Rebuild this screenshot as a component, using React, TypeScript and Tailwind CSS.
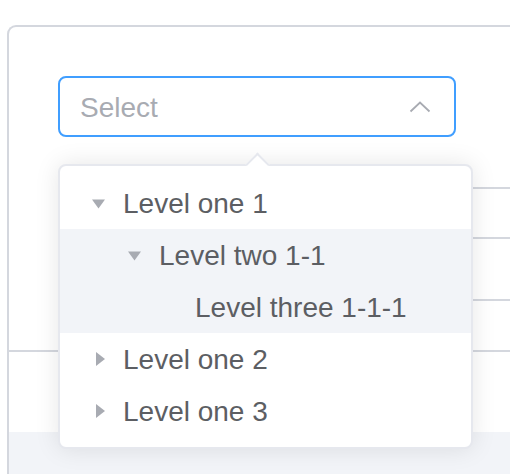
import React from "react";

const font = { fontFamily: '"Liberation Sans", Arial, Helvetica, sans-serif' };

function Down() {
  return (
    <svg width="14" height="14" viewBox="0 0 14 14" className="shrink-0">
      <polygon points="0,3.5 13,3.5 6.5,12.5" fill="#a8abb2" />
    </svg>
  );
}

function Right() {
  return (
    <svg width="14" height="14" viewBox="0 0 14 14" className="shrink-0">
      <polygon points="4,0 13,7 4,14" fill="#a8abb2" />
    </svg>
  );
}

function Row({
  level,
  icon,
  label,
  hl,
}: {
  level: number;
  icon: "down" | "right" | "none";
  label: string;
  hl?: boolean;
}) {
  const pl = level === 1 ? "pl-[32px]" : level === 2 ? "pl-[68px]" : "pl-[104px]";
  return (
    <div className={`flex h-[52px] items-center ${pl} ${hl ? "bg-[#f2f4f8]" : ""}`}>
      {icon === "down" ? <Down /> : icon === "right" ? <Right /> : <div className="w-[14px] shrink-0" />}
      <span className="ml-[17px] pt-[2px] text-[28px] leading-none text-[#5c5e63] whitespace-nowrap">{label}</span>
    </div>
  );
}

export default function App() {
  return (
    <div className="w-[510px] h-[474px] overflow-hidden bg-white pl-[7px] pt-[25px]" style={font}>
      <div className="w-[620px] h-[600px] border-l-2 border-t-2 border-[#d4d7de] rounded-tl-[9px]">
        <div className="pl-[49px] pt-[49px]">
          <div className="relative w-[398px] h-[61px] rounded-[8px] border-2 border-[#409eff] flex items-center justify-between pl-[20px] pr-[23px]">
            <span className="pt-[2px] text-[28px] leading-none text-[#a8abb2]">Select</span>
            <svg width="22" height="12" viewBox="0 0 22 12">
              <polyline points="1.5,10.5 11,1.5 20.5,10.5" fill="none" stroke="#a8abb2" strokeWidth="1.8" />
            </svg>
            <div className="absolute left-[-2px] top-[86px] z-10 w-[415px] h-[285px] rounded-[8px] border-2 border-[#e6e8ee] bg-white shadow-[0_0_24px_rgba(0,0,0,0.10)] py-[11px]">
              <div className="absolute left-[189px] top-[-10px] w-[17px] h-[17px] rotate-45 bg-white border-l-2 border-t-2 border-[#e6e8ee]" />
              <div className="relative">
                <Row level={1} icon="down" label="Level one 1" />
                <Row level={2} icon="down" label="Level two 1-1" hl />
                <Row level={3} icon="none" label="Level three 1-1-1" hl />
                <Row level={1} icon="right" label="Level one 2" />
                <Row level={1} icon="right" label="Level one 3" />
              </div>
            </div>
          </div>
        </div>
        <div className="h-[50px]" />
        <div className="h-[50px] ml-[100px] border-t-2 border-[#d4d7de]" />
        <div className="h-[62px] ml-[100px] border-t-2 border-[#d4d7de]" />
        <div className="h-[51px] ml-[100px] border-t-2 border-[#d4d7de]" />
        <div className="h-[82px] border-t-2 border-[#d4d7de]" />
        <div className="h-[120px] bg-[#f2f4f8]" />
      </div>
    </div>
  );
}
